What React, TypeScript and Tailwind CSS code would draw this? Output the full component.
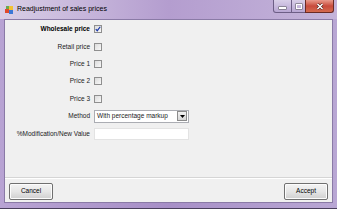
import React from "react";

const font = { fontFamily: '"Liberation Sans", Arial, sans-serif' };

function CheckBox({ checked }: { checked?: boolean }) {
  return (
    <span className="relative flex h-[8px] w-[8px] items-center justify-center border border-[#8f8f8f] bg-gradient-to-br from-[#dcdcdc] to-[#f8f8f8]">
      {checked && (
        <svg viewBox="0 0 8 8" className="absolute left-[0px] top-[0px] h-[6px] w-[6px]">
          <path d="M1 4.2 L3 6.3 L7 1" fill="none" stroke="#1a37a8" strokeWidth="1.6" />
        </svg>
      )}
    </span>
  );
}

function Row({ label, bold, children }: { label: string; bold?: boolean; children: React.ReactNode }) {
  return (
    <div className="flex h-[17.4px] items-center">
      <div className={`w-[89px] pr-[4px] text-right text-[6.5px] text-[#1a1a1a] ${bold ? "font-bold text-black" : ""}`}>
        {label}
      </div>
      {children}
    </div>
  );
}

function WinButton({ children }: { children: React.ReactNode }) {
  return (
    <button className="h-[17px] w-[44px] rounded-[2px] border border-[#707070] bg-gradient-to-b from-[#f4f4f4] via-[#e6e6e6] to-[#cfcfcf] text-[6.5px] text-black shadow-[inset_0_0_0_1px_#fcfcfc]">
      {children}
    </button>
  );
}

export default function App() {
  return (
    <div
      className="flex h-[209px] w-[337px] flex-col bg-gradient-to-r from-[#b8a3d3] via-[#a78fc7] to-[#b9a7d4]"
      style={font}
    >
      {/* title bar */}
      <div className="flex h-[19px] items-start bg-gradient-to-r from-[#d9cfe6] via-[#b49dcf] to-[#c4b4da]">
        <div className="flex h-[19px] items-center pl-[5px]">
          <svg viewBox="0 0 8 8" className="h-[8px] w-[8px]">
            <rect x="0" y="3" width="4" height="4" fill="#e04a2a" />
            <rect x="4" y="0" width="4" height="4" fill="#f1c232" />
            <rect x="4" y="4" width="4" height="4" fill="#3a78d6" />
            <rect x="1" y="0" width="3" height="3" fill="#6aa84f" />
          </svg>
          <span className="ml-[4px] text-[7px] text-black">Readjustment of sales prices</span>
        </div>
        <div className="ml-auto mr-[3px] flex h-[13px]">
          <div className="flex w-[19px] items-center justify-center rounded-bl-[3px] border border-t-0 border-[#6d5e86] bg-gradient-to-b from-[#d9cfe8] to-[#b8a6d3]">
            <span className="mt-[3px] h-[2px] w-[7px] bg-white shadow-[0_0_0_0.5px_#555]" />
          </div>
          <div className="flex w-[13px] items-center justify-center border-b border-[#6d5e86] bg-gradient-to-b from-[#d9cfe8] to-[#b8a6d3]">
            <span className="h-[5px] w-[6px] border-[1.5px] border-white shadow-[0_0_0_0.5px_#555]" />
          </div>
          <div className="flex w-[29px] items-center justify-center rounded-br-[3px] border border-t-0 border-[#6a2a24] bg-gradient-to-b from-[#e89a8c] via-[#c84b3c] to-[#d46a4f]">
            <svg viewBox="0 0 8 7" className="h-[7px] w-[8px]">
              <path d="M1.5 1 L6.5 6 M6.5 1 L1.5 6" stroke="#4a1a14" strokeWidth="2.6" />
              <path d="M1.5 1 L6.5 6 M6.5 1 L1.5 6" stroke="#ffffff" strokeWidth="1.6" />
            </svg>
          </div>
        </div>
      </div>

      {/* client */}
      <div className="mx-[4px] flex h-[184px] flex-col border border-[#8a7aa6] bg-[#f0f0f0]">
        <div className="flex flex-1 flex-col pt-[0.5px]">
          <Row label="Wholesale price" bold>
            <CheckBox checked />
          </Row>
          <Row label="Retail price">
            <CheckBox />
          </Row>
          <Row label="Price 1">
            <CheckBox />
          </Row>
          <Row label="Price 2">
            <CheckBox />
          </Row>
          <Row label="Price 3">
            <CheckBox />
          </Row>
          <Row label="Method">
            <div className="flex h-[13px] w-[95px] items-center border border-[#abadb3] bg-white">
              <span className="flex-1 pl-[2px] text-[6.5px] text-[#1a1a1a]">With percentage markup</span>
              <span className="mr-[1px] flex h-[10px] w-[10px] items-center justify-center border border-[#8c8c8c] bg-gradient-to-b from-[#f2f2f2] to-[#d6d6d6]">
                <svg viewBox="0 0 5 3" className="h-[3px] w-[5px]">
                  <path d="M0 0 L5 0 L2.5 3 Z" fill="#000" />
                </svg>
              </span>
            </div>
          </Row>
          <Row label="%Modification/New Value">
            <div className="h-[12px] w-[95px] border border-[#e3e3e3] bg-white" />
          </Row>
        </div>
        <div className="flex h-[25px] items-center justify-between border-t border-[#d5d5d5] px-[4px] pt-[2px] shadow-[inset_0_1px_0_#ffffff]">
          <WinButton>Cancel</WinButton>
          <WinButton>Accept</WinButton>
        </div>
      </div>
      <div className="flex-1" />
      <div className="h-[1px] bg-[#4a3f5c]" />
    </div>
  );
}
